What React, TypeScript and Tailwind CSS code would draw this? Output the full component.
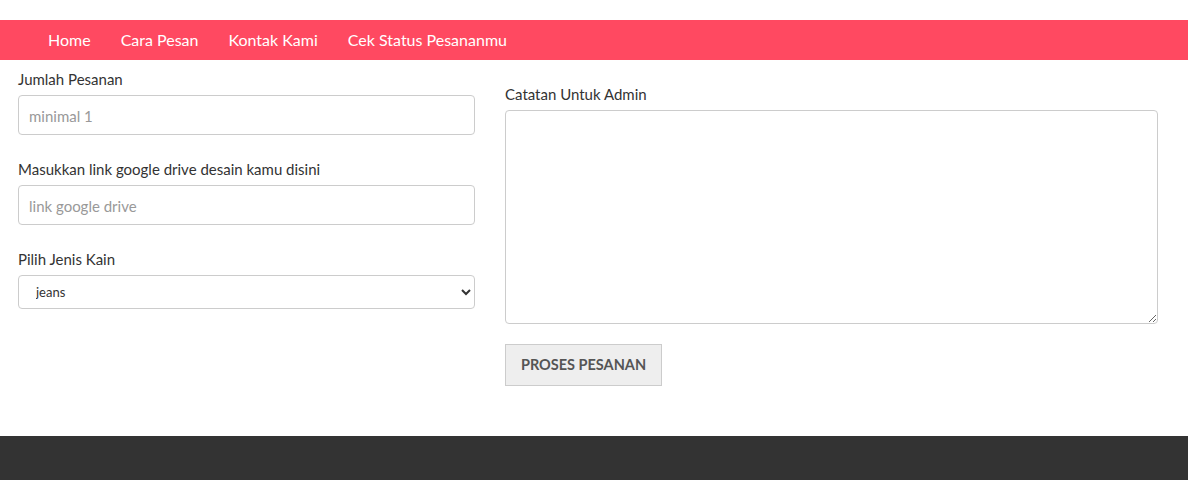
import { useState } from "react";

const NAV_LINKS = ["Home", "Cara Pesan", "Kontak Kami", "Cek Status Pesananmu"];

export default function App() {
  const [jumlah, setJumlah] = useState("");
  const [link, setLink] = useState("");
  const [kain, setKain] = useState("jeans");
  const [catatan, setCatatan] = useState("");

  return (
    <div className="bg-white font-['Lato','Liberation_Sans',sans-serif] text-[#333]">
      <div className="h-5" />
      <nav className="flex h-10 items-center bg-[#ff4961] pl-[33px]">
        {NAV_LINKS.map((label) => (
          <a key={label} href="#" className="px-[15px] text-[16px] leading-10 text-white">
            {label}
          </a>
        ))}
      </nav>

      <main className="flex gap-[30px] px-[18px] pb-[50px]">
        <div className="w-[457px] pt-[9px]">
          <label className="mb-[5px] block text-[15px] leading-[21px]">Jumlah Pesanan</label>
          <input
            value={jumlah}
            onChange={(e) => setJumlah(e.target.value)}
            placeholder="minimal 1"
            className="h-10 w-full rounded-[4px] border border-[#ccc] px-[10px] pt-[2px] text-[15px] placeholder:text-[#999] outline-none"
          />

          <label className="mt-6 mb-[5px] block text-[15px] leading-[21px]">
            Masukkan link google drive desain kamu disini
          </label>
          <input
            value={link}
            onChange={(e) => setLink(e.target.value)}
            placeholder="link google drive"
            className="h-10 w-full rounded-[4px] border border-[#ccc] px-[10px] pt-[2px] text-[15px] placeholder:text-[#999] outline-none"
          />

          <label className="mt-6 mb-[5px] block text-[15px] leading-[21px]">Pilih Jenis Kain</label>
          <select
            value={kain}
            onChange={(e) => setKain(e.target.value)}
            className="h-[34px] w-full rounded-[4px] border border-[#ccc] bg-white pl-[13px] pr-2 text-[13px] text-[#333] outline-none"
          >
            <option value="jeans">jeans</option>
            <option value="katun">katun</option>
            <option value="kanvas">kanvas</option>
          </select>
        </div>

        <div className="w-[653px] pt-6">
          <label className="mb-[5px] block text-[15px] leading-[21px]">Catatan Untuk Admin</label>
          <textarea
            value={catatan}
            onChange={(e) => setCatatan(e.target.value)}
            className="block h-[214px] w-full rounded-[4px] border border-[#ccc] px-[10px] py-2 text-[15px] outline-none"
          />
          <button className="mt-5 h-[42px] w-[157px] border border-[#ccc] bg-[#eee] text-[14.5px] font-bold text-[#555]">
            PROSES PESANAN
          </button>
        </div>
      </main>

      <footer className="h-[44px] bg-[#333]" />
    </div>
  );
}
